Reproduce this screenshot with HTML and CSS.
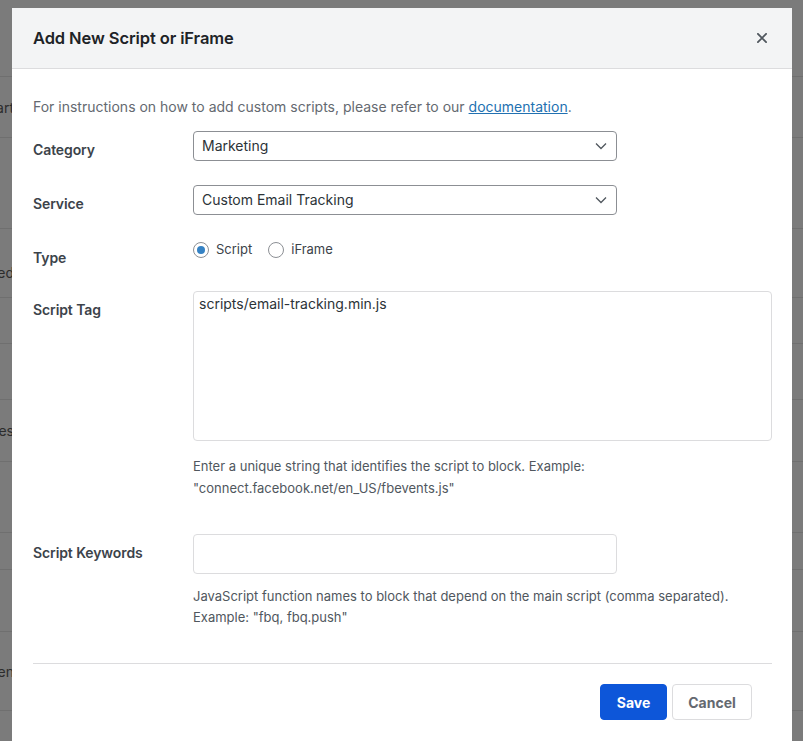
FILE: index.html
```html
<!DOCTYPE html>
<html lang="en">
<head>
<meta charset="utf-8">
<title>Add New Script or iFrame</title>
<link rel="stylesheet" href="styles.css">
</head>
<body>
<div class="bg">
  <div class="bg-row"></div>
  <div class="bg-row"><span class="tail">Start</span></div>
  <div class="bg-row"></div>
  <div class="bg-row tail-low"><span class="tail">Blocked</span></div>
  <div class="bg-row"></div>
  <div class="bg-row"></div>
  <div class="bg-row"><span class="tail">Services</span></div>
  <div class="bg-row"></div>
  <div class="bg-row"></div>
  <div class="bg-row"></div>
  <div class="bg-row"><span class="tail">Hidden</span></div>
  <div class="bg-row"></div>
</div>

<div class="modal" role="dialog" aria-labelledby="modal-title">
  <div class="modal-header">
    <h2 class="modal-title" id="modal-title">Add New Script or iFrame</h2>
    <button class="close" aria-label="Close">
      <svg width="11" height="11" viewBox="0 0 11 11"><path d="M1 1 L10 10 M10 1 L1 10" stroke="#50575e" stroke-width="2" stroke-linecap="square" fill="none"/></svg>
    </button>
  </div>
  <div class="modal-body">
    <p class="intro">For instructions on how to add custom scripts, please refer to our <a href="#">documentation</a>.</p>

    <div class="row row-first">
      <div class="label">Category</div>
      <div class="field">
        <div class="select"><span>Marketing</span>
          <svg class="chev" width="12" height="8" viewBox="0 0 12 8"><path d="M1 1.5 L6 6.5 L11 1.5" stroke="#50575e" stroke-width="1.3" fill="none"/></svg>
        </div>
      </div>
    </div>

    <div class="row row-gap">
      <div class="label">Service</div>
      <div class="field">
        <div class="select"><span>Custom Email Tracking</span>
          <svg class="chev" width="12" height="8" viewBox="0 0 12 8"><path d="M1 1.5 L6 6.5 L11 1.5" stroke="#50575e" stroke-width="1.3" fill="none"/></svg>
        </div>
      </div>
    </div>

    <div class="row row-gap">
      <div class="label">Type</div>
      <div class="field radios">
        <label class="radio-item"><span class="radio checked"></span>Script</label>
        <label class="radio-item"><span class="radio"></span>iFrame</label>
      </div>
    </div>

    <div class="row row-tag">
      <div class="label">Script Tag</div>
      <div class="field">
        <div class="textarea">scripts/email-tracking.min.js</div>
        <p class="help help-tag">Enter a unique string that identifies the script to block. Example:<br>"connect.facebook.net/en_US/fbevents.js"</p>
      </div>
    </div>

    <div class="row row-keywords">
      <div class="label">Script Keywords</div>
      <div class="field">
        <div class="input"></div>
        <p class="help help-kw">JavaScript function names to block that depend on the main script (comma separated).<br>Example: "fbq, fbq.push"</p>
      </div>
    </div>

    <div class="divider"></div>

    <div class="footer">
      <button class="btn btn-primary">Save</button>
      <button class="btn btn-secondary">Cancel</button>
    </div>
  </div>
</div>
</body>
</html>
```

FILE: styles.css
```css
* { box-sizing: border-box; }

html, body {
  margin: 0;
  height: 100%;
  overflow: hidden;
}

body {
  font-family: Inter, "Noto Sans", "Liberation Sans", sans-serif;
  background: #7b7b7b;
  position: relative;
}

/* dimmed page behind the dialog */
.bg {
  display: flex;
  flex-direction: column;
}

.bg-row {
  border-bottom: 1px solid #6f6f6f;
  display: flex;
  align-items: center;
  flex-shrink: 0;
}

.bg-row:nth-child(1) { height: 77px; }
.bg-row:nth-child(2) { height: 61px; }
.bg-row:nth-child(3) { height: 91px; }
.bg-row:nth-child(4) { height: 69px; }
.bg-row:nth-child(5) { height: 46px; }
.bg-row:nth-child(6) { height: 56px; }
.bg-row:nth-child(7) { height: 62px; }
.bg-row:nth-child(8) { height: 71px; }
.bg-row:nth-child(9) { height: 37px; }
.bg-row:nth-child(10) { height: 62px; }
.bg-row:nth-child(11) { height: 79px; }
.bg-row:nth-child(12) { height: 60px; border-bottom: 0; }

.tail-low { padding-top: 18px; }

.tail {
  width: 14px;
  overflow: hidden;
  display: flex;
  justify-content: flex-end;
  white-space: nowrap;
  font-size: 14px;
  color: #2c2c2c;
}

/* dialog */
.modal {
  position: absolute;
  left: 12px;
  top: 8px;
  width: 780px;
  height: 780px;
  background: #fff;
}

.modal-header {
  height: 61px;
  background: #f3f4f5;
  border-bottom: 1px solid #dcdcde;
  display: flex;
  align-items: center;
  justify-content: space-between;
  padding: 0 25px 0 21px;
}

.modal-title {
  margin: 0;
  font-size: 16.5px;
  font-weight: 600;
  color: #1d2327;
  letter-spacing: -0.1px;
}

.close {
  border: 0;
  background: transparent;
  padding: 0;
  width: 10px;
  height: 10px;
  display: flex;
}

.close svg {
  width: 10px;
  height: 10px;
}

.modal-body {
  padding: 28px 20px 0 21px;
}

.intro {
  margin: 0;
  font-size: 14px;
  line-height: 20px;
  color: #646970;
}

.intro a {
  color: #2271b1;
  text-decoration: underline;
}

.row {
  display: grid;
  grid-template-columns: 160px 1fr;
}

.row-first { margin-top: 14px; }
.row-gap { margin-top: 24px; }
.row-tag { margin-top: 23px; }
.row-keywords { margin-top: 35px; }

.label {
  padding-top: 9px;
  font-size: 14px;
  line-height: 20px;
  font-weight: 600;
  color: #3c434a;
  letter-spacing: -0.1px;
}

.select {
  width: 424px;
  height: 30px;
  border: 1px solid #8c8f94;
  border-radius: 4px;
  display: flex;
  align-items: center;
  justify-content: space-between;
  padding: 0 9px 1px 8px;
  font-size: 14px;
  color: #2c3338;
}

.radios {
  display: flex;
  align-items: center;
  height: 20px;
  gap: 16px;
  font-size: 13px;
  color: #3c434a;
}

.radio-item {
  display: flex;
  align-items: center;
  gap: 7px;
}

.radio {
  width: 16px;
  height: 16px;
  border: 1px solid #8c8f94;
  border-radius: 50%;
  display: flex;
  align-items: center;
  justify-content: center;
  margin-top: 2px;
}

.radio.checked::after {
  content: "";
  width: 8px;
  height: 8px;
  border-radius: 50%;
  background: #3582c4;
}

.textarea {
  width: 579px;
  height: 150px;
  border: 1px solid #dcdcde;
  border-radius: 4px;
  padding: 2px 5px;
  font-size: 14px;
  line-height: 20px;
  color: #2c3338;
}

.input {
  width: 424px;
  height: 40px;
  border: 1px solid #dcdcde;
  border-radius: 4px;
}

.help {
  margin: 0;
  font-size: 13px;
  color: #50575e;
}

.help-tag { margin-top: 14px; line-height: 22px; }
.help-kw { margin-top: 12px; line-height: 21px; }

.divider {
  margin-top: 35px;
  border-top: 1px solid #dcdcde;
}

.footer {
  margin-top: 20px;
  display: flex;
  justify-content: flex-end;
  gap: 5px;
  padding-right: 20px;
}

.btn {
  height: 36px;
  border-radius: 4px;
  font-family: inherit;
  font-size: 14px;
  font-weight: 700;
  cursor: pointer;
}

.btn-primary {
  width: 67px;
  background: #0d56d9;
  border: 1px solid #0d56d9;
  color: #fff;
}

.btn-secondary {
  width: 80px;
  background: #fff;
  border: 1px solid #dcdcde;
  color: #646970;
}
```
